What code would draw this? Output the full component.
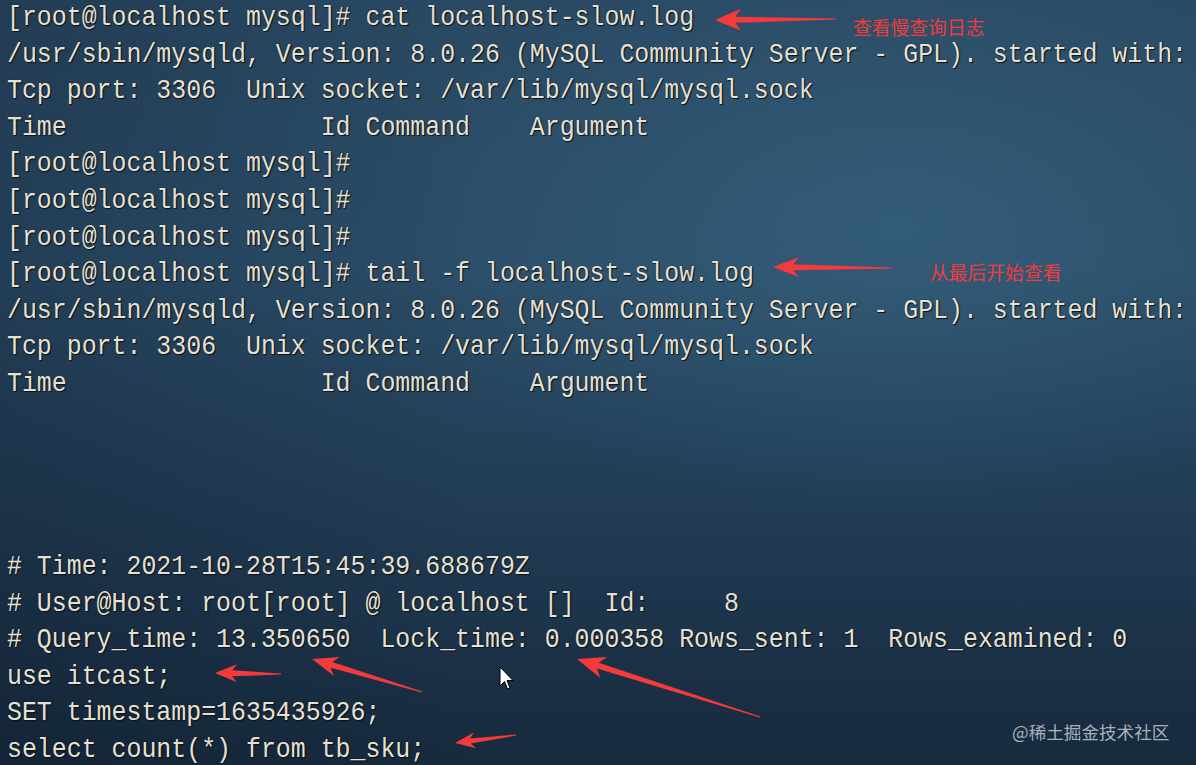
import React from "react";

const lines: string[] = [
  "[root@localhost mysql]# cat localhost-slow.log",
  "/usr/sbin/mysqld, Version: 8.0.26 (MySQL Community Server - GPL). started with:",
  "Tcp port: 3306  Unix socket: /var/lib/mysql/mysql.sock",
  "Time                 Id Command    Argument",
  "[root@localhost mysql]#",
  "[root@localhost mysql]#",
  "[root@localhost mysql]#",
  "[root@localhost mysql]# tail -f localhost-slow.log",
  "/usr/sbin/mysqld, Version: 8.0.26 (MySQL Community Server - GPL). started with:",
  "Tcp port: 3306  Unix socket: /var/lib/mysql/mysql.sock",
  "Time                 Id Command    Argument",
  "",
  "",
  "",
  "",
  "# Time: 2021-10-28T15:45:39.688679Z",
  "# User@Host: root[root] @ localhost []  Id:     8",
  "# Query_time: 13.350650  Lock_time: 0.000358 Rows_sent: 1  Rows_examined: 0",
  "use itcast;",
  "SET timestamp=1635435926;",
  "select count(*) from tb_sku;",
];

function arrowPoints(tx: number, ty: number, ex: number, ey: number, headLen = 26, headW = 22, shaftW = 7): string {
  const dx = ex - tx;
  const dy = ey - ty;
  const L = Math.hypot(dx, dy);
  const ux = dx / L;
  const uy = dy / L;
  const vx = -uy;
  const vy = ux;
  const p = (a: number, b: number) => `${(tx + ux * a + vx * b).toFixed(1)},${(ty + uy * a + vy * b).toFixed(1)}`;
  return [
    p(0, 0),
    p(headLen, headW / 2),
    p(headLen * 0.78, shaftW / 2),
    p(L, 0.6),
    p(L, -0.6),
    p(headLen * 0.78, -shaftW / 2),
    p(headLen, -headW / 2),
  ].join(" ");
}

const arrows: [number, number, number, number, number, number, number][] = [
  [715, 20, 836, 19, 26, 22, 6],
  [773, 267, 892, 268, 26, 20, 6],
  [215, 673, 281, 674, 22, 18, 6],
  [312, 659, 422, 692, 26, 20, 6],
  [577, 659, 760, 717, 28, 22, 6],
  [455, 743, 516, 735, 20, 16, 5],
];

export default function App() {
  return (
    <div className="relative w-[1196px] h-[765px] overflow-hidden bg-[#223d55]">
      <div className="absolute inset-0 bg-[linear-gradient(180deg,#2a4a64_0%,#2b4d68_35%,#203a52_70%,#172a3e_100%)]" />
      <div className="absolute inset-0 bg-[radial-gradient(ellipse_60%_55%_at_75%_30%,rgba(60,110,140,0.45),rgba(60,110,140,0)_70%)]" />
      <div className="absolute inset-0 bg-[linear-gradient(90deg,rgba(10,20,35,0.25)_0%,rgba(10,20,35,0)_40%)]" />

      <div className="relative pl-[7px] -mt-[1px] font-['Courier_New','Liberation_Mono',monospace] text-[24.9px] text-[#e6e1d4] [text-shadow:1px_1px_1px_#0b1118,0_0_1px_#0b1118]">
        {lines.map((l, i) => (
          <div key={i} className="h-[36.6px] leading-[36.6px] whitespace-pre scale-y-112">
            {l}
          </div>
        ))}
      </div>

      <div className="absolute left-[853px] top-[13px] font-['Noto_Sans_CJK_SC',sans-serif] text-[18.8px] text-[#f23b3b]">
        查看慢查询日志
      </div>
      <div className="absolute left-[930px] top-[258px] font-['Noto_Sans_CJK_SC',sans-serif] text-[18.8px] text-[#f23b3b]">
        从最后开始查看
      </div>
      <div className="absolute left-[1012px] top-[719px] font-['Noto_Sans_CJK_SC',sans-serif] text-[17.6px] text-[#a9b1ba]">
        @稀土掘金技术社区
      </div>

      <svg className="absolute inset-0" width="1196" height="765" viewBox="0 0 1196 765">
        {arrows.map((a, i) => (
          <polygon key={i} points={arrowPoints(a[0], a[1], a[2], a[3], a[4], a[5], a[6])} fill="#f43a3a" />
        ))}
        <path
          d="M500 667 L500 686 L504.5 681.5 L507.5 689 L510 688 L507 680.5 L513 680.5 Z"
          fill="#ffffff"
          stroke="#000000"
          strokeWidth="1"
          strokeLinejoin="round"
        />
      </svg>
    </div>
  );
}
